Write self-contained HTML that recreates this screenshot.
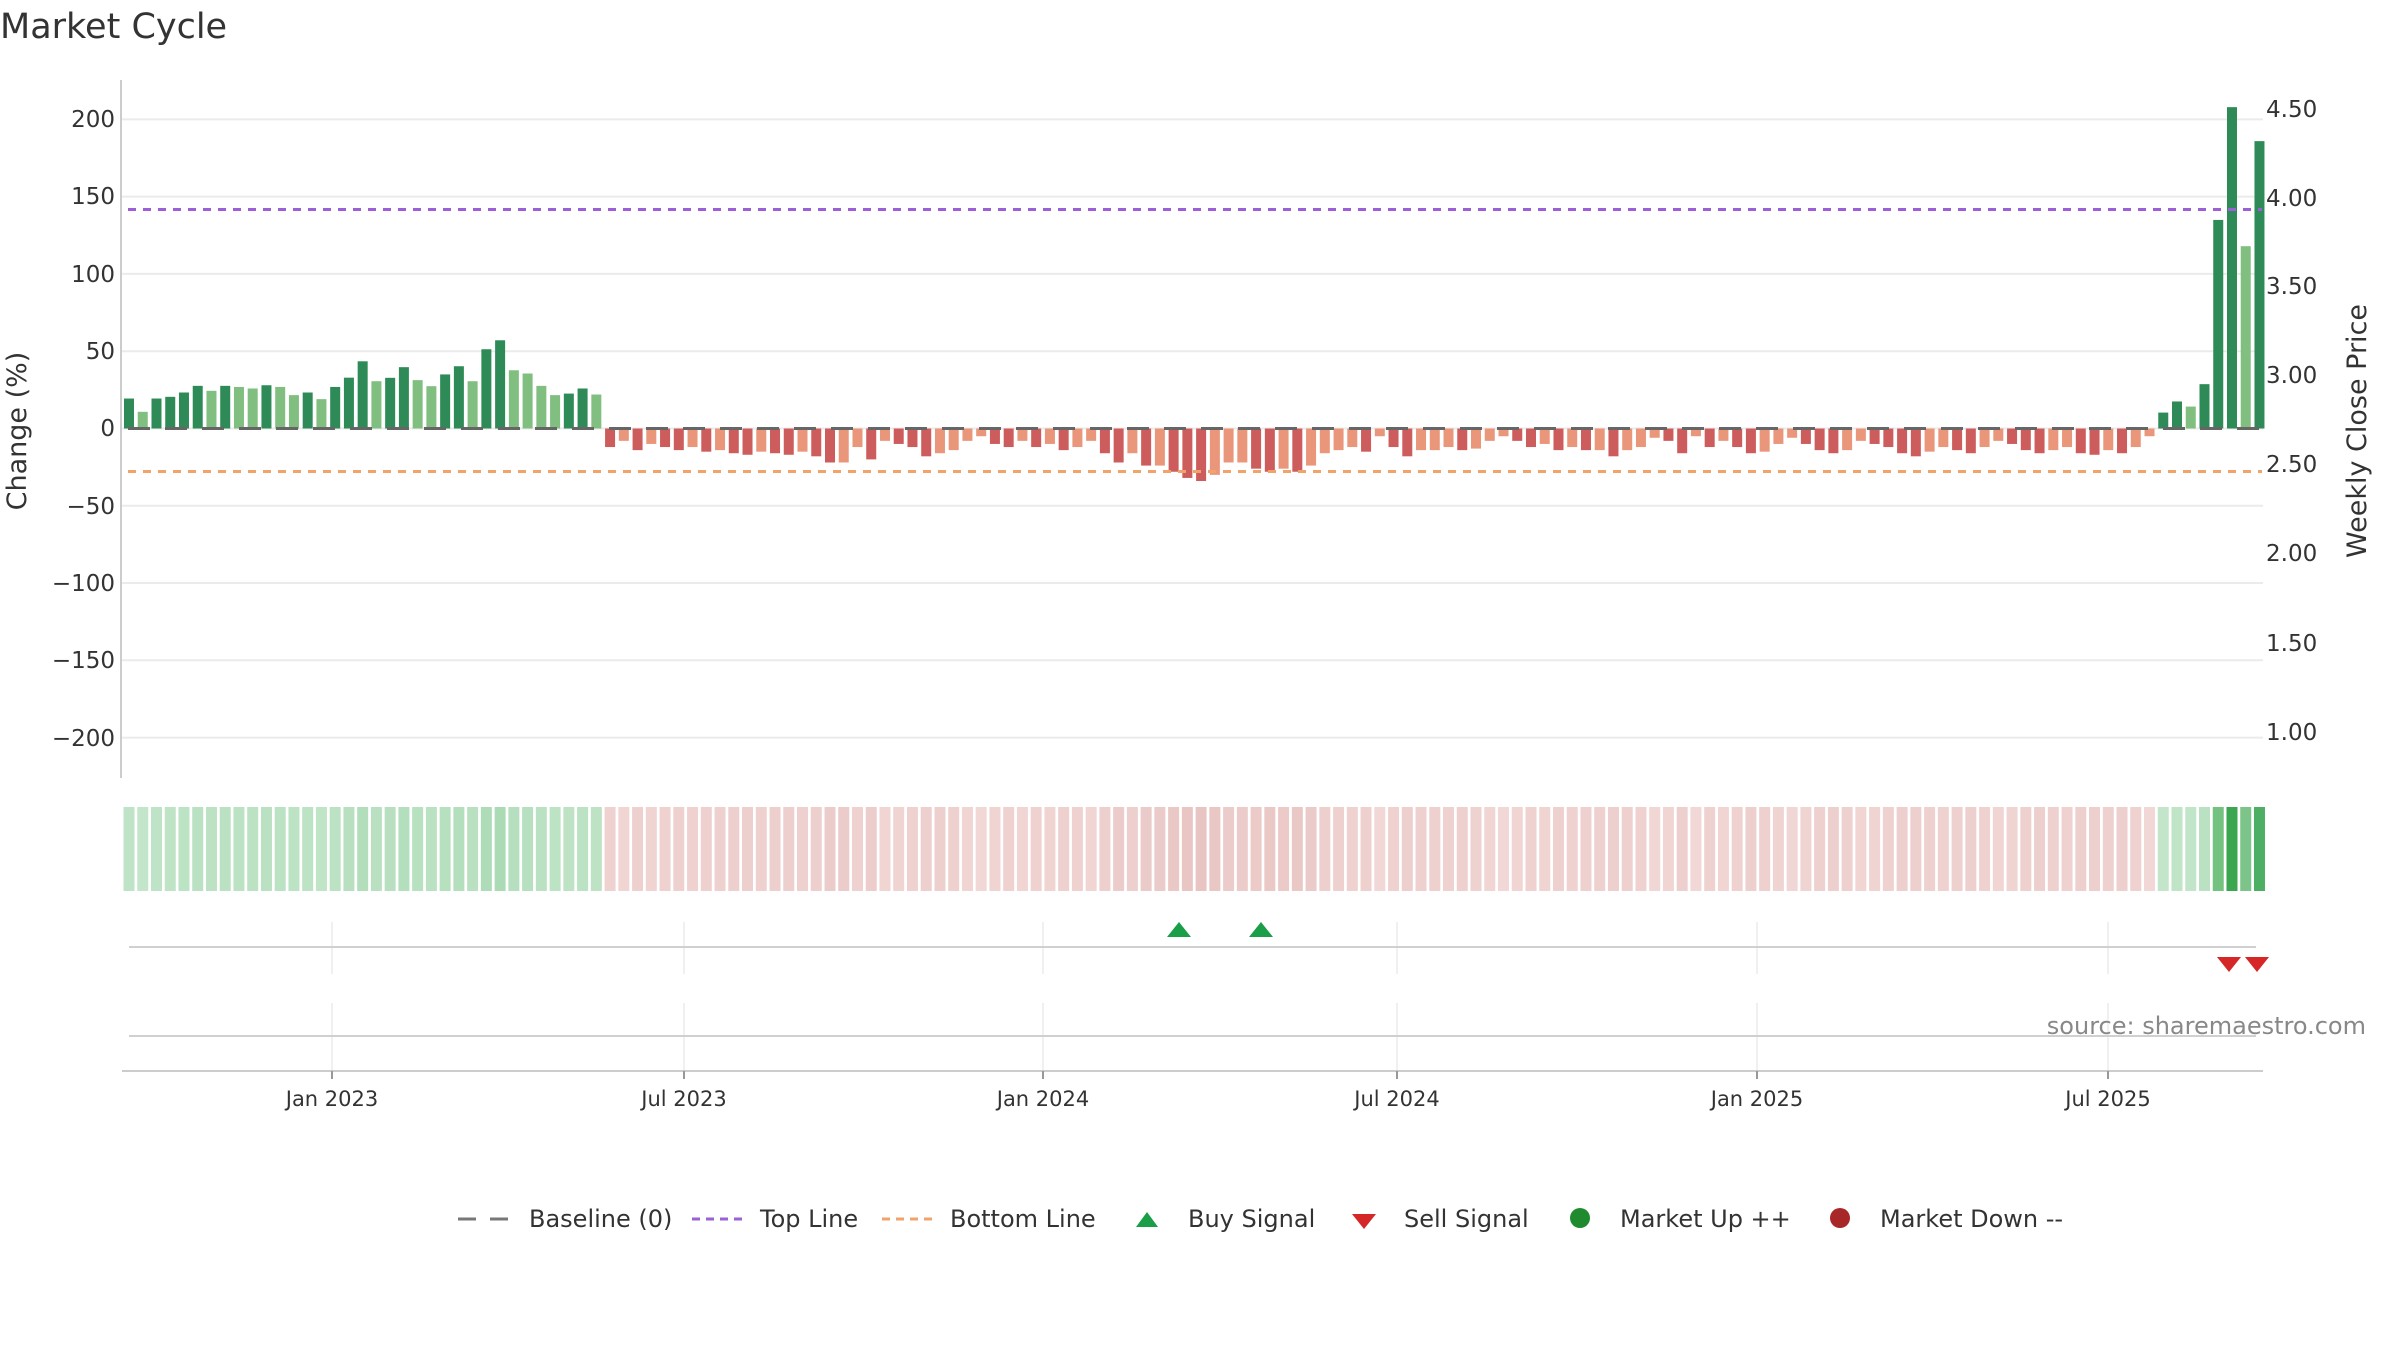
<!DOCTYPE html>
<html><head><meta charset="utf-8">
<style>
html,body{margin:0;padding:0;background:#fff;width:2400px;height:1350px;overflow:hidden}
svg{display:block;font-family:"DejaVu Sans","Liberation Sans",sans-serif}
</style></head>
<body>
<svg id="s" width="2400" height="1350" viewBox="0 0 2400 1350" xmlns="http://www.w3.org/2000/svg">
<text x="0" y="38" font-size="35" fill="#333">Market Cycle</text>
<g stroke="#ebebeb" stroke-width="2">
<line x1="122" x2="2263" y1="119.4" y2="119.4"/><line x1="122" x2="2263" y1="196.6" y2="196.6"/>
<line x1="122" x2="2263" y1="273.9" y2="273.9"/><line x1="122" x2="2263" y1="351.2" y2="351.2"/>
<line x1="122" x2="2263" y1="428.5" y2="428.5"/><line x1="122" x2="2263" y1="505.8" y2="505.8"/>
<line x1="122" x2="2263" y1="583" y2="583"/><line x1="122" x2="2263" y1="660.3" y2="660.3"/>
<line x1="122" x2="2263" y1="737.6" y2="737.6"/>
</g>
<line x1="121" x2="121" y1="80" y2="778" stroke="#ccc" stroke-width="2"/>
<g font-size="23" fill="#333" text-anchor="end">
<text x="115" y="127">200</text><text x="115" y="204">150</text><text x="115" y="282">100</text>
<text x="115" y="359">50</text><text x="115" y="436">0</text><text x="115" y="514">−50</text>
<text x="115" y="591">−100</text><text x="115" y="668">−150</text><text x="115" y="746">−200</text>
</g>
<g font-size="23" fill="#333">
<text x="2266" y="117">4.50</text><text x="2266" y="206">4.00</text><text x="2266" y="294">3.50</text>
<text x="2266" y="383">3.00</text><text x="2266" y="472">2.50</text><text x="2266" y="561">2.00</text>
<text x="2266" y="651">1.50</text><text x="2266" y="740">1.00</text>
</g>
<text transform="translate(26,431) rotate(-90)" font-size="27" fill="#333" text-anchor="middle">Change (%)</text>
<text transform="translate(2366,431) rotate(-90)" font-size="27" fill="#333" text-anchor="middle">Weekly Close Price</text>
<g id="bars"></g>
<g id="heat"></g>
<line x1="128" x2="2262" y1="428.5" y2="428.5" stroke="#666" stroke-width="3" stroke-dasharray="22 15"/>
<line x1="128" x2="2262" y1="209.5" y2="209.5" stroke="#9b5fd6" stroke-width="3" stroke-dasharray="8 7"/>
<line x1="128" x2="2262" y1="471.5" y2="471.5" stroke="#f0a36a" stroke-width="3" stroke-dasharray="8 7"/>
<g stroke="#eef0f2" stroke-width="2">
<line x1="332" x2="332" y1="922" y2="974"/><line x1="684" x2="684" y1="922" y2="974"/>
<line x1="1043" x2="1043" y1="922" y2="974"/><line x1="1397" x2="1397" y1="922" y2="974"/>
<line x1="1757" x2="1757" y1="922" y2="974"/><line x1="2108" x2="2108" y1="922" y2="974"/>
<line x1="332" x2="332" y1="1003" y2="1071"/><line x1="684" x2="684" y1="1003" y2="1071"/>
<line x1="1043" x2="1043" y1="1003" y2="1071"/><line x1="1397" x2="1397" y1="1003" y2="1071"/>
<line x1="1757" x2="1757" y1="1003" y2="1071"/><line x1="2108" x2="2108" y1="1003" y2="1071"/>
</g>
<line x1="129" x2="2256" y1="947" y2="947" stroke="#d0d0d0" stroke-width="2"/>
<line x1="129" x2="2256" y1="1036" y2="1036" stroke="#d0d0d0" stroke-width="2"/>
<line x1="122" x2="2263" y1="1071" y2="1071" stroke="#ccc" stroke-width="2"/>
<g stroke="#999" stroke-width="2">
<line x1="332" x2="332" y1="1071" y2="1079"/><line x1="684" x2="684" y1="1071" y2="1079"/>
<line x1="1043" x2="1043" y1="1071" y2="1079"/><line x1="1397" x2="1397" y1="1071" y2="1079"/>
<line x1="1757" x2="1757" y1="1071" y2="1079"/><line x1="2108" x2="2108" y1="1071" y2="1079"/>
</g>
<polygon points="1167,937 1179,922 1191,937" fill="#1a9e48"/>
<polygon points="1249,937 1261,922 1273,937" fill="#1a9e48"/>
<polygon points="2217,957 2241,957 2229,972" fill="#d62728"/>
<polygon points="2245,957 2269,957 2257,972" fill="#d62728"/>
<text x="2366" y="1034" font-size="24" fill="#888" text-anchor="end">source: sharemaestro.com</text>
<g font-size="21" fill="#333" text-anchor="middle">
<text x="332" y="1106">Jan 2023</text><text x="684" y="1106">Jul 2023</text><text x="1043" y="1106">Jan 2024</text>
<text x="1397" y="1106">Jul 2024</text><text x="1757" y="1106">Jan 2025</text><text x="2108" y="1106">Jul 2025</text>
</g>
<g font-size="24" fill="#333">
<line x1="458" x2="518" y1="1219" y2="1219" stroke="#777" stroke-width="3" stroke-dasharray="18 14"/>
<text x="529" y="1227">Baseline (0)</text>
<line x1="692" x2="748" y1="1219" y2="1219" stroke="#9b5fd6" stroke-width="3" stroke-dasharray="8 6"/>
<text x="760" y="1227">Top Line</text>
<line x1="882" x2="938" y1="1219" y2="1219" stroke="#f0a36a" stroke-width="3" stroke-dasharray="8 6"/>
<text x="950" y="1227">Bottom Line</text>
<polygon points="1136,1227 1147,1212 1158,1227" fill="#1a9e48"/>
<text x="1188" y="1227">Buy Signal</text>
<polygon points="1352,1214 1376,1214 1364,1229" fill="#d62728"/>
<text x="1404" y="1227">Sell Signal</text>
<circle cx="1580" cy="1218" r="10" fill="#1f8a2e"/>
<text x="1620" y="1227">Market Up ++</text>
<circle cx="1840" cy="1218" r="10" fill="#a82828"/>
<text x="1880" y="1227">Market Down --</text>
</g>
</svg>
<script>
var g1=[19.4,10.8,19.4,20.5,23.3,27.6,24.4,27.6,26.9,25.9,28,26.9,21.6,23.3,19,26.9,32.9,43.5,30.6,32.8,39.7,31.3,27.4,35,40.3,30.6,51.3,57.1,37.7,35.6,27.6,21.6,22.6,25.9,22];
var r=[-12,-8,-14,-10,-12,-14,-12,-15,-14,-16,-17,-15,-16,-17,-15,-18,-22,-22,-12,-20,-8,-10,-12,-18,-16,-14,-8,-5,-10,-12,-8,-12,-10,-14,-12,-8,-16,-22,-16,-24,-24,-28,-32,-34,-30,-22,-22,-26,-28,-26,-28,-24,-16,-14,-12,-15,-5,-12,-18,-14,-14,-12,-14,-13,-8,-5,-8,-12,-10,-14,-12,-14,-14,-18,-14,-12,-6,-8,-16,-5,-12,-8,-12,-16,-15,-10,-6,-10,-14,-16,-14,-8,-10,-12,-16,-18,-15,-12,-14,-16,-12,-8,-10,-14,-16,-14,-12,-16,-17,-14,-16,-12,-5];
while(r.length<113)r.push(-12);r=r.slice(0,113);
var g2=[10.3,17.5,14.2,28.7,135,208,118,186];
var v=g1.concat(r,g2);
var ns="http://www.w3.org/2000/svg",B=document.getElementById('bars'),H=document.getElementById('heat');
var x0=124,p=13.745,z=428.5,k=1.545;
function rect(par,x,y,w,h,f){var e=document.createElementNS(ns,'rect');e.setAttribute('x',x);e.setAttribute('y',y);e.setAttribute('width',w);e.setAttribute('height',h);e.setAttribute('fill',f);par.appendChild(e);}
for(var i=0;i<v.length;i++){
 var a=v[i],pr=i?v[i-1]:0,x=x0+i*p,c,hc;
 if(a>=0){c=(a>pr)?'#2e8b57':'#80bf7f';}
 else{c=(a<pr)?'#cd5c5c':'#e9967a';}
 var h=Math.abs(a)*k;
 if(a>=0)rect(B,x,z-h,10,h,c);else rect(B,x,z,10,h,c);
 if(a>=0){
   if(a>100)hc=(a>200)?'#3aa650':(a>150?'#4caf64':'#74c27f');
   else { var t=Math.min(a/60,1); var R=Math.round(200-30*t),G=Math.round(232-14*t),Bc=Math.round(206-26*t); hc='rgb('+R+','+G+','+Bc+')'; }
   if(a>115&&a<125)hc='#7cc48a';
 } else { var t=Math.min(-a/35,1); var R=Math.round(242-10*t),G=Math.round(218-22*t),Bc=Math.round(216-22*t); hc='rgb('+R+','+G+','+Bc+')'; }
 rect(H,x-0.5,807,11,84,hc);
}
</script>
</body></html>
